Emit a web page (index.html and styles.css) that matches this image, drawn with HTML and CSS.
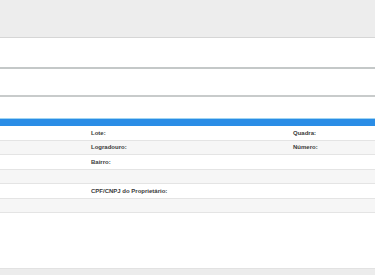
FILE: index.html
```html
<!DOCTYPE html>
<html lang="pt-BR">

<head>
  <meta charset="UTF-8">
  <title>Consulta de Imóvel</title>
  <meta name="viewport" content="width=device-width, initial-scale=1.0">
  <link rel="stylesheet" href="styles.css">
</head>

<body>

  <div class="topbar"></div>

  <div class="panel panel-first"></div>
  <div class="panel panel-second"></div>
  <div class="panel panel-third"></div>

  <div class="table-head"></div>

  <div class="info-table">
    <div class="row">
      <span></span>
      <span class="label">Lote:</span>
      <span class="label">Quadra:</span>
    </div>
    <div class="row alt">
      <span></span>
      <span class="label">Logradouro:</span>
      <span class="label">Número:</span>
    </div>
    <div class="row">
      <span></span>
      <span class="label">Bairro:</span>
      <span></span>
    </div>
    <div class="row alt">
      <span></span>
      <span></span>
      <span></span>
    </div>
    <div class="row">
      <span></span>
      <span class="label">CPF/CNPJ do Proprietário:</span>
      <span></span>
    </div>
    <div class="row alt">
      <span></span>
      <span></span>
      <span></span>
    </div>
  </div>

  <div class="spacer"></div>
  <div class="footer"></div>

</body>

</html>
```

FILE: styles.css
```css
* {
  box-sizing: border-box;
}

body {
  margin: 0;
  font-family: "Liberation Sans", Arial, sans-serif;
  background: #fff;
  overflow: hidden;
}

.topbar {
  height: 38px;
  background: #ededed;
  border-bottom: 1px solid #d6d6d6;
  box-shadow: 0 1px 2px rgba(0, 0, 0, 0.12);
}

.panel {
  background: #fff;
}

.panel-first {
  height: 31px;
  border-bottom: 2px solid #c4c8c8;
}

.panel-second {
  height: 28px;
  border-bottom: 2px solid #c8cbcb;
}

.panel-third {
  height: 21px;
}

.table-head {
  height: 8px;
  background: #2a8de6;
  border-top: 1px solid #9fd4f2;
}

.info-table {
  font-size: 6px;
  font-weight: bold;
  color: #3a3a3a;
}

.row {
  display: grid;
  grid-template-columns: 91px 202px 1fr;
  align-items: center;
  height: 14.5px;
  border-bottom: 1px solid #e4e4e4;
  background: #fff;
}

.row.alt {
  background: #f6f6f6;
}

.spacer {
  height: 55px;
}

.footer {
  height: 20px;
  background: #ececec;
  border-top: 1px solid #e2e2e2;
}
```
